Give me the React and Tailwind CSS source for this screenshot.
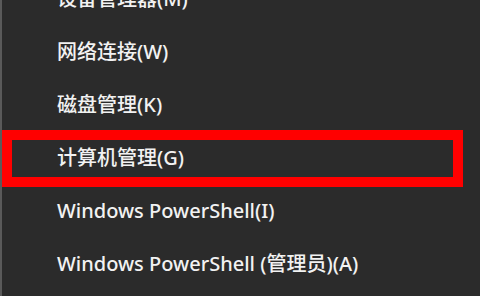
const items = [
  { label: '设备管理器(M)' },
  { label: '网络连接(W)' },
  { label: '磁盘管理(K)' },
  { label: '计算机管理(G)', marked: true },
  { label: 'Windows PowerShell(I)' },
  { label: 'Windows PowerShell (管理员)(A)' },
];

export default function App() {
  return (
    <div className="w-[480px] h-[296px] overflow-hidden bg-[#2b2b2b] border-l-2 border-[#5a5a5a] font-['Noto_Sans','Noto_Sans_CJK_SC',sans-serif]">
      <ul className="-mt-[28px] flex flex-col">
        {items.map((item) => (
          <li key={item.label} className="relative h-[53px] flex items-center pl-[55px] text-[20px] font-medium text-[#f2f2f2]">
            {item.label}
            {item.marked && (
              <div className="absolute top-[-1px] left-0 w-[461px] h-[57px] border-[10px] border-[#ff0000]" />
            )}
          </li>
        ))}
      </ul>
    </div>
  );
}
